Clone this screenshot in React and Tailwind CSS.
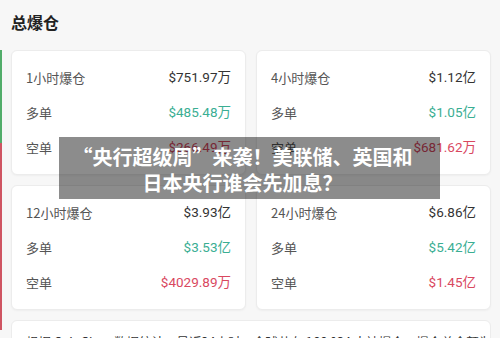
import React from "react";

const cjk = { fontFamily: '"Noto Sans CJK SC", "Noto Sans", sans-serif' };
const num = { fontFamily: 'Roboto, "Noto Sans CJK SC", sans-serif' };

function Row({ label, value, color }) {
  return (
    <div className="flex h-[35px] items-center justify-between">
      <span className="text-[13px] text-[#555]" style={cjk}>{label}</span>
      <span className={`text-[13.5px] ${color}`} style={num}>{value}</span>
    </div>
  );
}

function Card({ rows }) {
  return (
    <div className="w-[235px] shrink-0 rounded-[6px] border border-[#ececec] bg-white px-[14px] py-[9px] shadow-[0_1px_2px_rgba(0,0,0,0.04)]">
      <Row label={rows[0][0]} value={rows[0][1]} color="text-[#333]" />
      <Row label="多单" value={rows[1]} color="text-[#3aae93]" />
      <Row label="空单" value={rows[2]} color="text-[#d9485f]" />
    </div>
  );
}

export default function App() {
  return (
    <div className="relative flex h-[338px] w-[500px] overflow-hidden bg-[#f7f7f7]">
      <div className="flex w-[2px] shrink-0 flex-col">
        <div className="h-[50px] shrink-0" />
        <div className="h-[93px] shrink-0 bg-[#52ad6a]" />
        <div className="h-[187px] shrink-0 bg-[#cf5562]" />
      </div>
      <div className="flex min-w-0 flex-1 flex-col pl-[9px] pr-[9px]">
        <div className="flex h-[50px] shrink-0 items-center pb-[6px] text-[16px] font-bold text-[#222]" style={cjk}>
          总爆仓
        </div>
        <div className="flex shrink-0 gap-[10px]">
          <Card rows={[["1小时爆仓", "$751.97万"], "$485.48万", "$266.49万"]} />
          <Card rows={[["4小时爆仓", "$1.12亿"], "$1.05亿", "$681.62万"]} />
        </div>
        <div className="mt-[10px] flex shrink-0 gap-[10px]">
          <Card rows={[["12小时爆仓", "$3.93亿"], "$3.53亿", "$4029.89万"]} />
          <Card rows={[["24小时爆仓", "$6.86亿"], "$5.42亿", "$1.45亿"]} />
        </div>
        <div className="mt-[10px] h-[60px] w-[480px] shrink-0 overflow-hidden rounded-[6px] border border-[#ececec] bg-white px-[14px] pt-[12px]">
          <p className="whitespace-nowrap text-[12.5px] text-[#333]" style={cjk}>
            根据 CoinGlass 数据统计，最近24小时，全球共有 166,034 人被爆仓，爆仓总金额为
          </p>
        </div>
      </div>
      <div className="absolute left-[59px] top-[137px] flex h-[62px] w-[381px] flex-col items-center justify-center bg-[rgba(0,0,0,0.45)] pr-[14px] pt-[4px] text-center text-[20px] font-bold leading-[26px] text-white" style={cjk}>
        <div className="whitespace-nowrap">
          <span className="inline-block w-[1em] text-right">“</span>央行超级周<span className="inline-block w-[1em] text-left">”</span>来袭！美联储、英国和
        </div>
        <div className="whitespace-nowrap">日本央行谁会先加息？</div>
      </div>
    </div>
  );
}
